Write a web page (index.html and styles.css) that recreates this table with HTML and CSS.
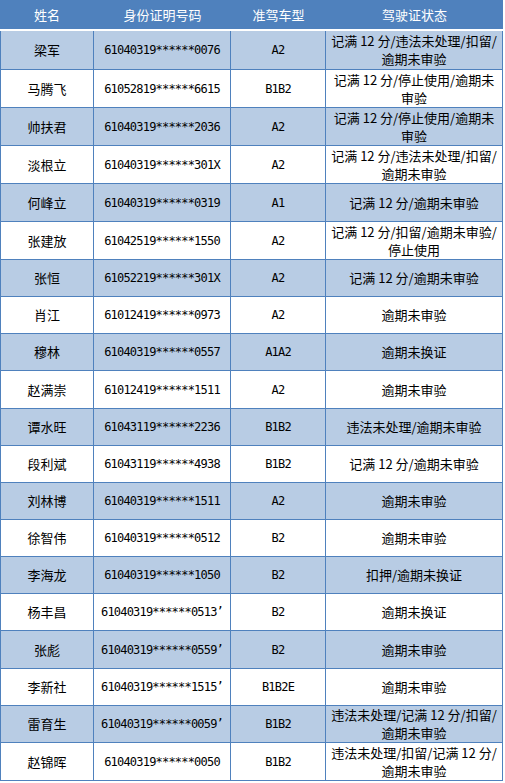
FILE: index.html
```html
<!DOCTYPE html>
<html lang="zh-CN">
<head>
<meta charset="utf-8">
<title>驾驶证状态</title>
<link rel="stylesheet" href="styles.css">
</head>
<body>
<div class="head">
  <div class="hc">姓名</div>
  <div class="hc">身份证明号码</div>
  <div class="hc">准驾车型</div>
  <div class="hc">驾驶证状态</div>
</div>
<div class="sheet">
  <div class="row alt"><div class="c">梁军</div><div class="c id">61040319******0076</div><div class="c ty">A2</div><div class="c">记满 12 分/违法未处理/扣留/<br>逾期未审验</div></div>
  <div class="row"><div class="c">马腾飞</div><div class="c id">61052819******6615</div><div class="c ty">B1B2</div><div class="c">记满 12 分/停止使用/逾期未<br>审验</div></div>
  <div class="row alt"><div class="c">帅扶君</div><div class="c id">61040319******2036</div><div class="c ty">A2</div><div class="c">记满 12 分/停止使用/逾期未<br>审验</div></div>
  <div class="row"><div class="c">淡根立</div><div class="c id">61040319******301X</div><div class="c ty">A2</div><div class="c">记满 12 分/违法未处理/扣留/<br>逾期未审验</div></div>
  <div class="row alt"><div class="c">何峰立</div><div class="c id">61040319******0319</div><div class="c ty">A1</div><div class="c">记满 12 分/逾期未审验</div></div>
  <div class="row"><div class="c">张建放</div><div class="c id">61042519******1550</div><div class="c ty">A2</div><div class="c">记满 12 分/扣留/逾期未审验/<br>停止使用</div></div>
  <div class="row alt"><div class="c">张恒</div><div class="c id">61052219******301X</div><div class="c ty">A2</div><div class="c">记满 12 分/逾期未审验</div></div>
  <div class="row"><div class="c">肖江</div><div class="c id">61012419******0973</div><div class="c ty">A2</div><div class="c">逾期未审验</div></div>
  <div class="row alt"><div class="c">穆林</div><div class="c id">61040319******0557</div><div class="c ty">A1A2</div><div class="c">逾期未换证</div></div>
  <div class="row"><div class="c">赵满崇</div><div class="c id">61012419******1511</div><div class="c ty">A2</div><div class="c">逾期未审验</div></div>
  <div class="row alt"><div class="c">谭水旺</div><div class="c id">61043119******2236</div><div class="c ty">B1B2</div><div class="c">违法未处理/逾期未审验</div></div>
  <div class="row"><div class="c">段利斌</div><div class="c id">61043119******4938</div><div class="c ty">B1B2</div><div class="c">记满 12 分/逾期未审验</div></div>
  <div class="row alt"><div class="c">刘林博</div><div class="c id">61040319******1511</div><div class="c ty">A2</div><div class="c">逾期未审验</div></div>
  <div class="row"><div class="c">徐智伟</div><div class="c id">61040319******0512</div><div class="c ty">B2</div><div class="c">逾期未审验</div></div>
  <div class="row alt"><div class="c">李海龙</div><div class="c id">61040319******1050</div><div class="c ty">B2</div><div class="c">扣押/逾期未换证</div></div>
  <div class="row"><div class="c">杨丰昌</div><div class="c id">61040319******0513’</div><div class="c ty">B2</div><div class="c">逾期未换证</div></div>
  <div class="row alt"><div class="c">张彪</div><div class="c id">61040319******0559’</div><div class="c ty">B2</div><div class="c">逾期未审验</div></div>
  <div class="row"><div class="c">李新社</div><div class="c id">61040319******1515’</div><div class="c ty">B1B2E</div><div class="c">逾期未审验</div></div>
  <div class="row alt"><div class="c">雷育生</div><div class="c id">61040319******0059’</div><div class="c ty">B1B2</div><div class="c">违法未处理/记满 12 分/扣留/<br>逾期未审验</div></div>
  <div class="row"><div class="c">赵锦晖</div><div class="c id">61040319******0050</div><div class="c ty">B1B2</div><div class="c">违法未处理/扣留/记满 12 分/<br>逾期未审验</div></div>
</div>
</body>
</html>
```
FILE: styles.css
```css
html, body {
  margin: 0;
  padding: 0;
  background: #ffffff;
}

body {
  font-family: "Noto Sans CJK SC", "Noto Sans", sans-serif;
  font-size: 13px;
  color: #000000;
}

.head {
  display: grid;
  grid-template-columns: 94px 137px 95px 177px;
  width: 503px;
  height: 29px;
  background: #4f81bd;
  margin-bottom: 2px;
}

.hc {
  display: flex;
  align-items: center;
  justify-content: center;
  color: #ffffff;
  font-size: 13px;
}

.sheet {
  display: grid;
  width: 503px;
  box-sizing: border-box;
  border-left: 1px solid #4f81bd;
  grid-template-columns: 93px 137px 95px 177px;
  grid-template-rows: 39px 38px 38px 38px 38px 38px 37px 37px 37px 38px 37px 37px 37px 37px 37px 37px 38px 37px 37px 38px;
}

.row {
  display: contents;
}

.c {
  display: flex;
  align-items: center;
  justify-content: center;
  text-align: center;
  box-sizing: border-box;
  border-right: 1px solid #4f81bd;
  border-bottom: 1px solid #4f81bd;
  line-height: 18px;
  white-space: nowrap;
  background: #ffffff;
}

.alt .c {
  background: #b8cce4;
}

.id,
.ty {
  font-family: "DejaVu Sans Mono", "Liberation Mono", monospace;
  font-size: 12px;
  letter-spacing: -0.8px;
}
```
